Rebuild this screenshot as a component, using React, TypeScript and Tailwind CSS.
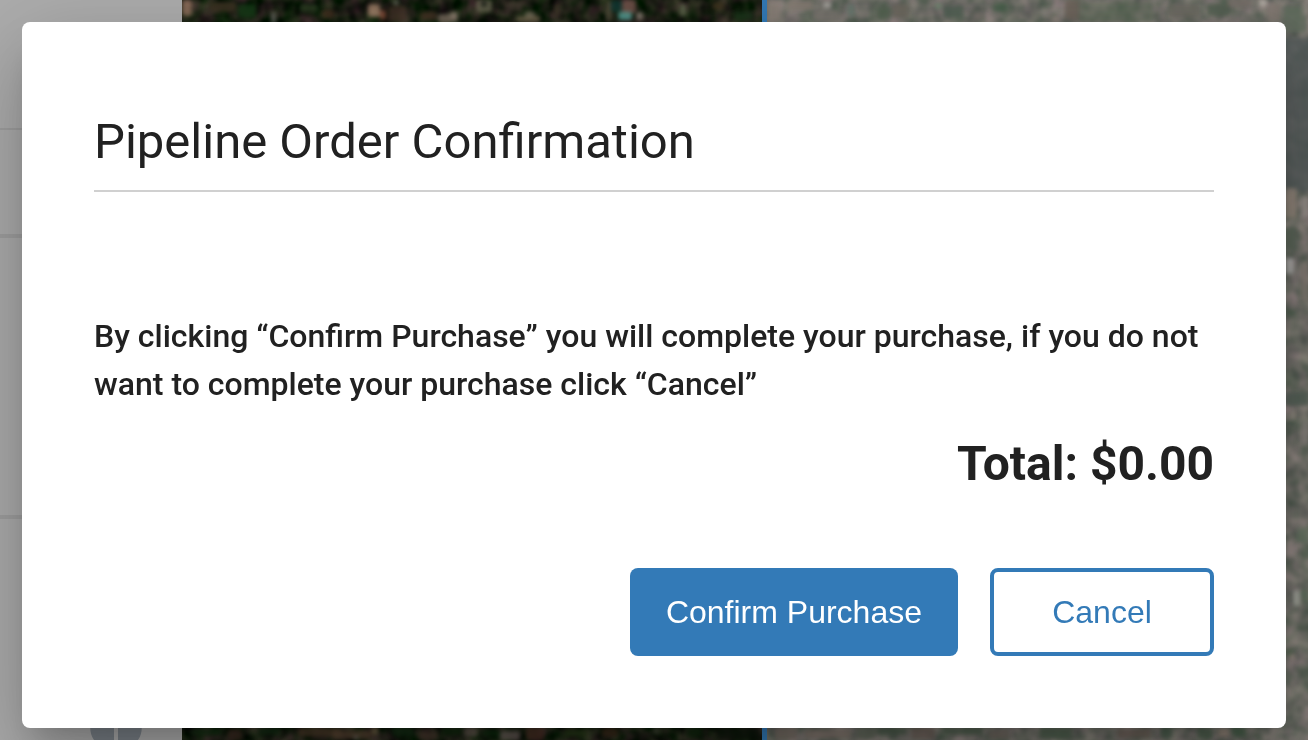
type Patch = [x: number, y: number, w: number, h: number, color: string]

// fields, roofs and roads visible around the dialog
const darkPatches: Patch[] = [
  [0, 0, 10, 16, '#9a7563'],
  [28, 2, 26, 10, '#3c3222'],
  [56, 4, 18, 14, '#173c18'],
  [89, 12, 5, 12, '#686a62'],
  [118, 4, 18, 8, '#2a3f22'],
  [140, 10, 12, 8, '#43301f'],
  [186, 4, 12, 13, '#ad8a70'],
  [198, 10, 6, 10, '#8a4e38'],
  [206, 6, 18, 16, '#453429'],
  [211, 0, 6, 5, '#6f7063'],
  [238, 12, 16, 8, '#453223'],
  [256, 14, 20, 9, '#7c6e60'],
  [268, 12, 8, 6, '#948577'],
  [294, 0, 16, 12, '#6a6853'],
  [299, 1, 6, 6, '#101710'],
  [334, 16, 24, 6, '#72664d'],
  [343, 12, 10, 5, '#7b7360'],
  [372, 4, 6, 12, '#3e3828'],
  [424, 0, 5, 22, '#58503f'],
  [429, 0, 11, 12, '#103a36'],
  [440, 0, 14, 13, '#7a5750'],
  [436, 12, 14, 8, '#58a59d'],
  [454, 12, 7, 8, '#8e8578'],
  [498, 4, 6, 12, '#626a50'],
  [530, 2, 12, 8, '#40331f'],
  [552, 12, 20, 8, '#1b341b'],
]

const darkBottomPatches: Patch[] = [
  [8, 2, 32, 6, '#102f10'],
  [46, 2, 14, 12, '#3b2920'],
  [76, 0, 22, 8, '#102a12'],
  [116, 0, 42, 10, '#4c3b29'],
  [150, 3, 40, 9, '#5a4533'],
  [190, 0, 6, 8, '#776747'],
  [210, 0, 22, 9, '#122d13'],
  [171, 8, 6, 5, '#72675f'],
  [236, 4, 20, 9, '#4b392f'],
  [260, 0, 20, 8, '#0d260b'],
  [282, 0, 14, 10, '#61564d'],
  [300, 2, 18, 8, '#0d2a0c'],
  [318, 4, 20, 9, '#675d58'],
  [344, 0, 18, 13, '#4b3024'],
  [382, 2, 24, 8, '#263917'],
  [420, 0, 16, 10, '#3b2a19'],
  [471, 0, 6, 7, '#454c39'],
  [504, 0, 18, 10, '#0b230a'],
  [536, 0, 42, 13, '#0b150a'],
]

const palePatches: Patch[] = [
  [0, 2, 14, 20, '#8b8078'],
  [20, 0, 26, 10, '#857a72'],
  [56, 2, 8, 6, '#b1afa9'],
  [46, 12, 28, 9, '#77736d'],
  [80, 4, 8, 12, '#65776d'],
  [110, 6, 14, 14, '#50604e'],
  [126, 4, 16, 14, '#6d675e'],
  [168, 3, 7, 6, '#728b73'],
  [176, 6, 20, 12, '#4c5c50'],
  [206, 12, 10, 8, '#77716a'],
  [226, 4, 14, 8, '#435c47'],
  [274, 8, 7, 9, '#86817b'],
  [284, 16, 9, 6, '#91837d'],
  [298, 0, 14, 20, '#6d6259'],
  [312, 2, 74, 20, '#55665299'],
  [402, 4, 30, 14, '#68665e'],
  [440, 4, 22, 12, '#4f5d4e'],
  [460, 0, 24, 7, '#756d66'],
  [492, 0, 8, 6, '#bab4ac'],
  [500, 4, 14, 18, '#817770'],
  [516, 6, 24, 26, '#5f6b5d'],
  [536, 6, 6, 10, '#8e8781'],
  [512, 38, 40, 154, '#535a5a'],
  [518, 188, 12, 30, '#988a7e'],
  [534, 196, 8, 22, '#98918c'],
  [516, 228, 14, 22, '#566355'],
  [519, 258, 8, 16, '#b4b1b0'],
  [534, 262, 8, 40, '#817872'],
  [518, 392, 24, 14, '#4f5d52'],
  [522, 410, 8, 10, '#908980'],
  [534, 420, 8, 24, '#85807b'],
  [530, 528, 12, 14, '#62705f'],
  [519, 540, 8, 16, '#988c88'],
  [526, 590, 7, 16, '#a8aaa0'],
  [534, 590, 8, 10, '#5a6b59'],
  [518, 648, 8, 8, '#53644f'],
  [522, 654, 6, 6, '#9c9082'],
]

const paleBottomPatches: Patch[] = [
  [8, 0, 22, 13, '#746a62'],
  [38, 3, 46, 8, '#83766d'],
  [90, 2, 20, 10, '#5c6456'],
  [110, 0, 30, 8, '#475847'],
  [144, 0, 24, 12, '#6b5f58'],
  [176, 0, 40, 8, '#4c5d4b'],
  [222, 3, 20, 9, '#6e655e'],
  [272, 0, 34, 12, '#4a5c4a'],
  [350, 2, 34, 9, '#6c5f56'],
  [394, 0, 12, 11, '#455a48'],
  [430, 0, 16, 12, '#485d4a'],
  [451, 2, 11, 8, '#99877a'],
  [465, 0, 14, 10, '#425c46'],
]

interface TerrainProps {
  id: string
  tones: string
  patches: Patch[]
  bottomPatches: Patch[]
}

function Blobs({ patches }: { patches: Patch[] }) {
  return (
    <>
      {patches.map(([x, y, w, h, color]) => (
        <rect key={`${x}-${y}`} x={x} y={y} width={w} height={h} rx="3" fill={color} opacity="0.8" />
      ))}
    </>
  )
}

function Terrain({ id, tones, patches, bottomPatches }: TerrainProps) {
  return (
    <svg className="block h-full w-full" aria-hidden="true">
      <filter id={`${id}-ground`} x="0" y="0" width="100%" height="100%" colorInterpolationFilters="sRGB">
        <feTurbulence type="fractalNoise" baseFrequency="0.06" numOctaves="2" seed="8" />
        <feColorMatrix type="matrix" values={tones} />
      </filter>
      <filter id={`${id}-soft`} colorInterpolationFilters="sRGB">
        <feGaussianBlur stdDeviation="2" />
      </filter>
      <rect width="100%" height="100%" filter={`url(#${id}-ground)`} />
      <g filter={`url(#${id}-soft)`}>
        <Blobs patches={patches} />
      </g>
      <svg y="100%" overflow="visible">
        <g transform="translate(0 -13)" filter={`url(#${id}-soft)`}>
          <Blobs patches={bottomPatches} />
        </g>
      </svg>
    </svg>
  )
}

function Backdrop() {
  return (
    <div className="absolute inset-0 flex overflow-hidden bg-[#adadad]" aria-hidden="true">
      <div className="flex w-[182px] shrink-0 flex-col">
        <div className="box-content h-32 border-b-2 border-[#a0a0a0]" />
        <div className="box-content h-26 border-b-4 border-[#a0a0a0]" />
        <div className="box-content h-[277px] border-b-4 border-[#a0a0a0]" />
        <svg className="mt-auto mr-10 block h-6 w-[52px] self-end" viewBox="0 0 52 24">
          <path d="M24 0H4C-1 6-1 17 4 24h20zM28 0h20c5 6 5 17 0 24H28z" fill="#7c838a" />
        </svg>
      </div>
      <div className="w-[580px] shrink-0">
        <Terrain
          id="dark"
          tones="0.42 0 0 0 -0.1  0.26 0.16 0 0 -0.08  0.3 0 0 0 -0.07  0 0 0 0 1"
          patches={darkPatches}
          bottomPatches={darkBottomPatches}
        />
      </div>
      <div className="w-[5px] shrink-0 bg-[#337ab7]" />
      <div className="min-w-0 flex-1">
        <Terrain
          id="pale"
          tones="0.36 0 0 0 0.26  0.24 0.06 0 0 0.29  0.28 0 0 0 0.27  0 0 0 0 1"
          patches={palePatches}
          bottomPatches={paleBottomPatches}
        />
      </div>
    </div>
  )
}

export default function App() {
  return (
    <div className="relative flex min-h-screen flex-col overflow-hidden px-[22px] pt-[22px] pb-3">
      <Backdrop />
      <div
        role="dialog"
        aria-modal="true"
        aria-labelledby="dialog-title"
        className="relative rounded-lg bg-white p-[72px] font-['Roboto',sans-serif] text-[#212121] shadow-[0_22px_30px_-14px_rgba(0,0,0,0.2),0_48px_76px_6px_rgba(0,0,0,0.14),0_18px_92px_16px_rgba(0,0,0,0.12)]"
      >
        <h1
          id="dialog-title"
          className="border-b-2 border-[#d0d0d0] text-[49px] leading-[96px] font-normal"
        >
          Pipeline Order Confirmation
        </h1>
        <p className="mt-[120px] text-[32px] leading-[48px] font-medium">
          By clicking “Confirm Purchase” you will complete your purchase, if you do not want to
          complete your purchase click “Cancel”
        </p>
        <p className="mt-8 text-right text-[48px] leading-[48px] font-bold">Total: $0.00</p>
        <div className="mt-20 flex justify-end gap-8 font-['Liberation_Sans',sans-serif] text-[32px]">
          <button type="button" className="h-[88px] rounded-lg bg-[#337ab7] px-9 text-white">
            Confirm Purchase
          </button>
          <button
            type="button"
            className="h-[88px] w-56 rounded-lg border-4 border-[#337ab7] bg-white text-[#337ab7]"
          >
            Cancel
          </button>
        </div>
      </div>
    </div>
  )
}
